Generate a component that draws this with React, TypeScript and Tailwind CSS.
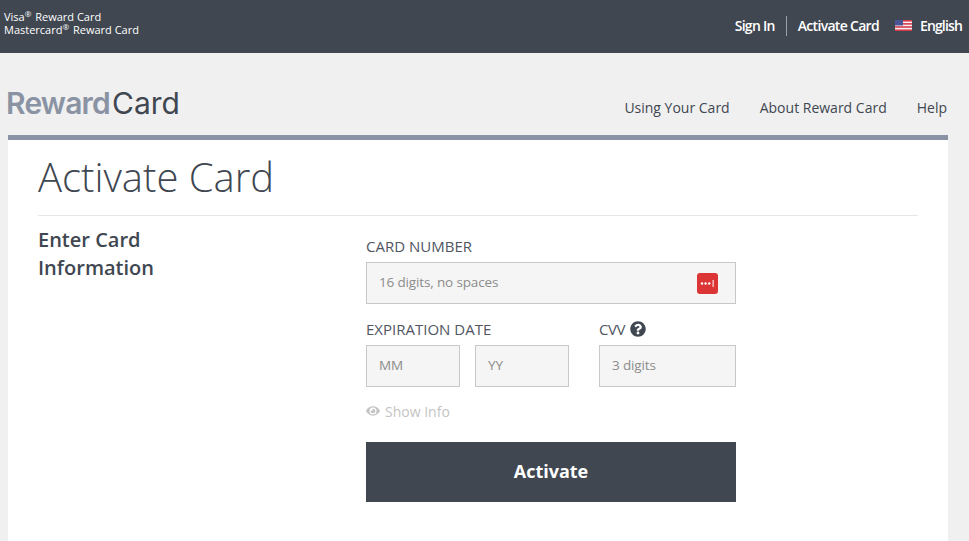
import { FaEye, FaQuestionCircle } from "react-icons/fa";

const font = "font-['Open_Sans',sans-serif]";

const UsFlag = () => (
  <svg width="17" height="11" viewBox="0 0 17 11" className="mr-[8px]">
    <rect width="17" height="11" fill="#f4f4f6" />
    <rect width="17" height="1.6" fill="#d8394a" />
    <rect y="3.1" width="17" height="1.6" fill="#d8394a" />
    <rect y="6.2" width="17" height="1.6" fill="#d8394a" />
    <rect y="9.4" width="17" height="1.6" fill="#d8394a" />
    <rect width="8" height="5.5" fill="#4a5596" />
  </svg>
);

const PasswordBadge = () => (
  <svg width="21" height="21" viewBox="0 0 21 21">
    <rect width="21" height="21" rx="3" fill="#dc3535" />
    <circle cx="5" cy="10.5" r="1.2" fill="#fff" />
    <circle cx="8.6" cy="10.5" r="1.2" fill="#fff" />
    <circle cx="12.2" cy="10.5" r="1.2" fill="#fff" />
    <rect x="15.6" y="7" width="1" height="7" fill="#fff" />
  </svg>
);

const Field = ({ placeholder, className }: { placeholder: string; className: string }) => (
  <div
    className={`flex h-[42px] items-center border border-[#c8c8c8] bg-[#f5f5f5] pb-[2px] pl-3 text-[13.5px] font-medium tracking-[-0.15px] text-[#8c8c8c] ${className}`}
  >
    {placeholder}
  </div>
);

export default function App() {
  return (
    <div className={`${font} h-[541px] w-[969px] overflow-hidden bg-[#f0f0f0]`}>
      <header className="flex h-[53px] items-center justify-between bg-[#404751] pl-1 pr-[7px] text-white">
        <div className="mb-[7px] text-[11px] leading-[13px]">
          <div>
            Visa<sup className="mr-[1px] text-[8px] leading-none">®</sup> Reward Card
          </div>
          <div>
            Mastercard<sup className="mr-[1px] text-[8px] leading-none">®</sup> Reward Card
          </div>
        </div>
        <div className="mb-[2px] flex items-center text-[14px] font-semibold tracking-[-0.7px]">
          <span>Sign In</span>
          <span className="mx-[11px] h-[20px] w-px bg-[#9ba1a9]" />
          <span>Activate Card</span>
          <span className="ml-[16px] flex items-center tracking-[-0.85px]">
            <UsFlag />
            English
          </span>
        </div>
      </header>

      <div className="flex h-[82px] items-center justify-between pl-[6px] pr-[22px]">
        <div className="mt-[18px] font-['Inter',sans-serif] text-[30px]">
          <span className="mr-[2px] font-semibold tracking-[-0.8px] text-[#8a93a3]">Reward</span>
          <span className="text-[#404751]">Card</span>
        </div>
        <nav className="mt-[46px] mb-[20px] flex gap-[30px] text-[14px] text-[#404751]">
          <span>Using Your Card</span>
          <span>About Reward Card</span>
          <span>Help</span>
        </nav>
      </div>

      <main className="mx-2 h-[406px] w-[940px] border-t-[5px] border-[#8a93a3] bg-white px-[30px]">
        <h1 className="h-[76px] border-b border-[#e6e6e6] pt-[8px] text-[40px] font-light leading-[57px] text-[#404751]">
          Activate Card
        </h1>
        <div className="flex pt-[10px]">
          <h2 className="w-[328px] text-[20px] font-semibold leading-[28px] text-[#404751]">
            Enter Card
            <br />
            Information
          </h2>
          <form className="w-[370px] pt-[10px] text-[#50565f]">
            <label className="block text-[15px] leading-[20px]">CARD NUMBER</label>
            <div className="relative mt-[6px]">
              <Field placeholder="16 digits, no spaces" className="w-full" />
              <span className="absolute right-[18px] top-[11px]">
                <PasswordBadge />
              </span>
            </div>
            <div className="mt-[15px] flex">
              <div>
                <label className="block text-[15px] leading-[20px]">EXPIRATION DATE</label>
                <div className="mt-[6px] flex gap-[15px]">
                  <Field placeholder="MM" className="w-[94px]" />
                  <Field placeholder="YY" className="w-[94px]" />
                </div>
              </div>
              <div className="ml-[30px]">
                <label className="flex h-[20px] items-center gap-[5px] text-[15px] tracking-[-0.5px]">
                  CVV
                  <FaQuestionCircle size={16} className="text-[#404751]" />
                </label>
                <Field placeholder="3 digits" className="mt-[6px] w-[137px]" />
              </div>
            </div>
            <div className="mt-[14px] flex h-[20px] items-center gap-[5px] text-[14px] text-[#c4c4c4]">
              <FaEye size={14} />
              Show Info
            </div>
            <button
              type="button"
              className="mt-[21px] h-[60px] w-full bg-[#404751] pb-[2px] text-[18px] font-bold text-white"
            >
              Activate
            </button>
          </form>
        </div>
      </main>
    </div>
  );
}
